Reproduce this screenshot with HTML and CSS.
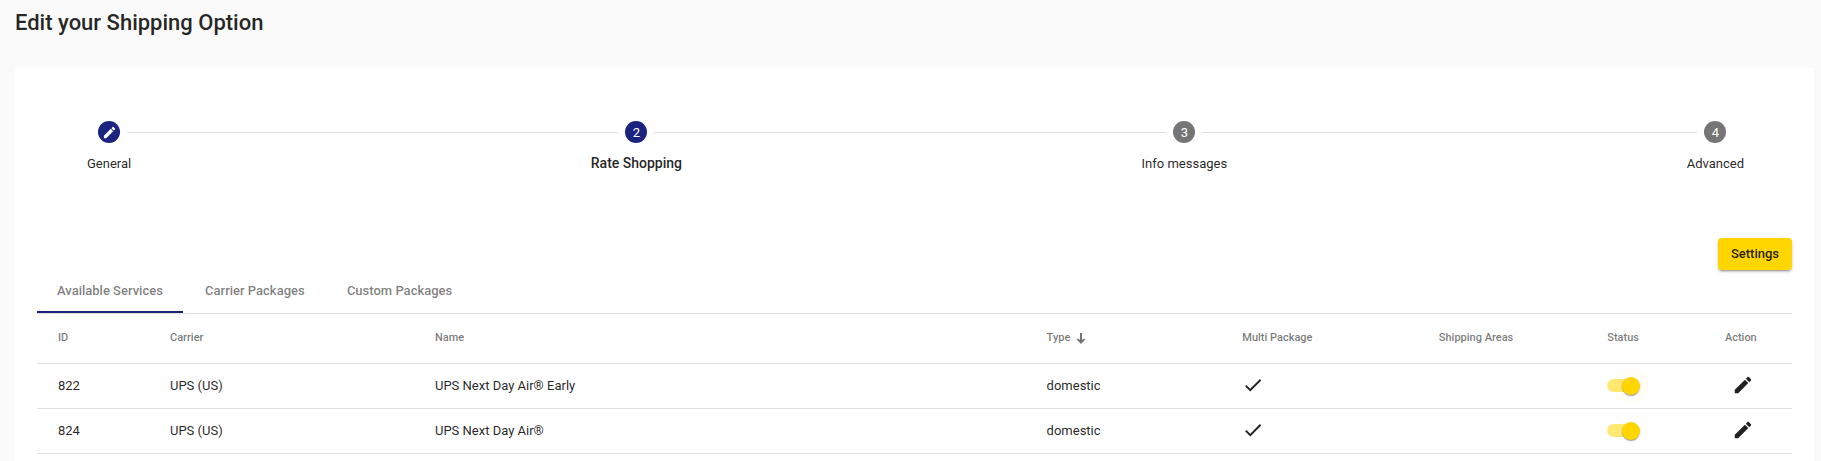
FILE: index.html
```html
<!DOCTYPE html>
<html lang="en">
<head>
    <title>Edit your Shipping Option</title>
    <meta charset="UTF-8">
    <link rel="stylesheet" href="styles.css">
</head>
<body>
    <svg class="icon-defs" width="0" height="0">
        <symbol id="icon-edit" viewBox="0 0 24 24">
            <path d="M3 17.25V21h3.75L17.81 9.94l-3.75-3.75L3 17.25zM20.71 7.04c.39-.39.39-1.02 0-1.41l-2.34-2.34c-.39-.39-1.02-.39-1.41 0l-1.83 1.83 3.75 3.75 1.83-1.83z"/>
        </symbol>
        <symbol id="icon-check" viewBox="0 0 24 24">
            <path d="M9 16.17L4.83 12l-1.42 1.41L9 19 21 7l-1.41-1.41z"/>
        </symbol>
    </svg>

    <h1 class="page-title">Edit your Shipping Option</h1>

    <main class="card">
        <!-- Stepper -->
        <ol class="stepper">
            <li class="step">
                <span class="step-marker">
                    <span class="step-icon active"><svg class="icon-small"><use href="#icon-edit"/></svg></span>
                </span>
                <span class="step-label">General</span>
            </li>
            <li class="step-line" role="presentation"></li>
            <li class="step">
                <span class="step-marker"><span class="step-icon active">2</span></span>
                <span class="step-label selected">Rate Shopping</span>
            </li>
            <li class="step-line" role="presentation"></li>
            <li class="step">
                <span class="step-marker"><span class="step-icon">3</span></span>
                <span class="step-label">Info messages</span>
            </li>
            <li class="step-line" role="presentation"></li>
            <li class="step">
                <span class="step-marker"><span class="step-icon">4</span></span>
                <span class="step-label">Advanced</span>
            </li>
        </ol>

        <div class="toolbar">
            <button type="button" class="btn-settings">Settings</button>
        </div>

        <!-- Tabs -->
        <div class="tabs" role="tablist">
            <button type="button" class="tab active" role="tab" aria-selected="true">Available Services</button>
            <button type="button" class="tab" role="tab" aria-selected="false">Carrier Packages</button>
            <button type="button" class="tab" role="tab" aria-selected="false">Custom Packages</button>
        </div>

        <table class="services">
            <colgroup>
                <col class="col-id">
                <col class="col-carrier">
                <col class="col-name">
                <col class="col-type">
                <col class="col-multi">
                <col class="col-areas">
                <col class="col-status">
                <col class="col-action">
            </colgroup>
            <thead>
                <tr>
                    <th>ID</th>
                    <th>Carrier</th>
                    <th>Name</th>
                    <th aria-sort="descending">
                        <span class="sort">Type
                            <svg class="sort-arrow" viewBox="0 0 10 12"><path d="M4 1h2v7l2-1.5 1.3 1L5 12 .7 7.5l1.3-1L4 8z"/></svg>
                        </span>
                    </th>
                    <th>Multi Package</th>
                    <th>Shipping Areas</th>
                    <th>Status</th>
                    <th>Action</th>
                </tr>
            </thead>
            <tbody>
                <tr>
                    <td>822</td>
                    <td>UPS (US)</td>
                    <td>UPS Next Day Air® Early</td>
                    <td>domestic</td>
                    <td><svg class="icon"><use href="#icon-check"/></svg></td>
                    <td></td>
                    <td><input type="checkbox" class="toggle focused" aria-label="Status of 822" checked></td>
                    <td><button type="button" class="btn-icon" aria-label="Edit 822"><svg class="icon"><use href="#icon-edit"/></svg></button></td>
                </tr>
                <tr>
                    <td>824</td>
                    <td>UPS (US)</td>
                    <td>UPS Next Day Air®</td>
                    <td>domestic</td>
                    <td><svg class="icon"><use href="#icon-check"/></svg></td>
                    <td></td>
                    <td><input type="checkbox" class="toggle" aria-label="Status of 824" checked></td>
                    <td><button type="button" class="btn-icon" aria-label="Edit 824"><svg class="icon"><use href="#icon-edit"/></svg></button></td>
                </tr>
            </tbody>
        </table>
    </main>
</body>
</html>
```

FILE: styles.css
```css
* {
    box-sizing: border-box;
}
body {
    display: flex;
    flex-direction: column;
    min-height: 100vh;
    margin: 0;
    padding: 8px 7px 0 15px;
    background-color: #fafafa;
    color: rgba(0,0,0,0.87);
    font-family: Roboto, "Liberation Sans", sans-serif;
    font-size: 13px;
}
button {
    border: none;
    background: none;
    font-family: inherit;
    font-size: 13px;
    font-weight: 500;
    cursor: pointer;
}
.icon-defs {
    position: absolute;
}
.page-title {
    margin: 0 0 30px;
    font-size: 22px;
    font-weight: 500;
    line-height: 30px;
}
.card {
    flex: 1;
    padding: 53px 22px 7px;
    background-color: white;
}

/* stepper */
.stepper {
    display: flex;
    margin: 0 0 63px;
    padding: 0 26px 0 28px;
    list-style: none;
}
.step {
    display: flex;
    flex-direction: column;
    gap: 10px;
}
.step-marker {
    display: flex;
    align-items: center;
    gap: 7px;
}
.step-marker::before,
.step-marker::after {
    content: "";
    flex: 1;
    border-top: 1px solid #e0e0e0;
}
.step:first-child .step-marker::before,
.step:last-child .step-marker::after {
    border-color: transparent;
}
.step-line {
    flex: 1;
    height: 1px;
    margin-top: 11px;
    background-color: #e0e0e0;
}
.step-icon {
    display: flex;
    align-items: center;
    justify-content: center;
    width: 22px;
    height: 22px;
    border-radius: 50%;
    background-color: #757575;
    color: white;
}
.step-icon.active {
    background-color: #1a237e;
}
.step-label {
    padding: 0 22px;
    line-height: 22px;
}
.step-label.selected {
    font-size: 14px;
    font-weight: 500;
    line-height: 20px;
}

.toolbar {
    display: flex;
    justify-content: flex-end;
}
.btn-settings {
    height: 32px;
    padding: 0 13px 1px;
    border-radius: 4px;
    background-color: #ffd600;
    color: rgba(0,0,0,0.87);
    box-shadow: 0 3px 1px -2px rgba(0,0,0,0.2), 0 2px 2px 0 rgba(0,0,0,0.14), 0 1px 4px 0 rgba(0,0,0,0.12);
}

/* tabs */
.tabs {
    display: flex;
    border-bottom: 1px solid #e0e0e0;
}
.tab {
    min-width: 144px;
    height: 43px;
    padding: 0 20px;
    border-bottom: 2px solid transparent;
    color: rgba(0,0,0,0.52);
}
.tab.active {
    border-bottom-color: #1a237e;
}

/* table */
.services {
    width: 100%;
    table-layout: fixed;
    border-collapse: separate;
    border-spacing: 0;
}
.col-id { width: 7.35%; }
.col-carrier { width: 15.1%; }
.col-name { width: 34.85%; }
.col-type { width: 11.15%; }
.col-multi { width: 11.2%; }
.col-areas { width: 9.6%; }
.col-status { width: 6.7%; }
.col-action { width: 4.05%; }
.services th,
.services td {
    padding: 0 0 2px 4px;
    border-bottom: 1px solid #e0e0e0;
    text-align: left;
}
.services th:first-child,
.services td:first-child {
    padding-left: 21px;
}
.services th {
    height: 50px;
    color: rgba(0,0,0,0.54);
    font-size: 11px;
    font-weight: 500;
}
.services td {
    height: 45px;
}
.sort {
    display: flex;
    align-items: center;
    gap: 6px;
}
.sort-arrow {
    width: 10px;
    height: 12px;
    fill: #757575;
}
.icon {
    display: block;
    width: 22px;
    height: 22px;
    fill: rgba(0,0,0,0.87);
}
.icon-small {
    width: 15px;
    height: 15px;
    fill: white;
}
.btn-icon {
    display: flex;
    align-items: center;
    justify-content: center;
    width: 36px;
    height: 36px;
    padding: 0;
}

/* slide toggle, the thumb hangs over the track */
.toggle {
    appearance: none;
    position: relative;
    display: block;
    width: 32px;
    height: 13px;
    margin: 0;
    border-radius: 7px;
    background-color: rgba(0,0,0,0.38);
    cursor: pointer;
}
.toggle::before {
    content: "";
    position: absolute;
    top: -2px;
    left: 0;
    width: 18px;
    height: 18px;
    border-radius: 50%;
    background-color: #fafafa;
    box-shadow: 0 2px 1px -1px rgba(0,0,0,0.2), 0 1px 1px 0 rgba(0,0,0,0.14), 0 1px 3px 0 rgba(0,0,0,0.12);
}
.toggle:checked {
    background-color: rgba(255,214,0,0.54);
}
.toggle:checked::before {
    left: 15px;
    background-color: #ffd600;
}
.toggle.focused::after {
    content: "";
    position: absolute;
    top: -11px;
    left: 6px;
    width: 36px;
    height: 36px;
    border-radius: 50%;
    background-color: rgba(255,214,0,0.04);
}
```
